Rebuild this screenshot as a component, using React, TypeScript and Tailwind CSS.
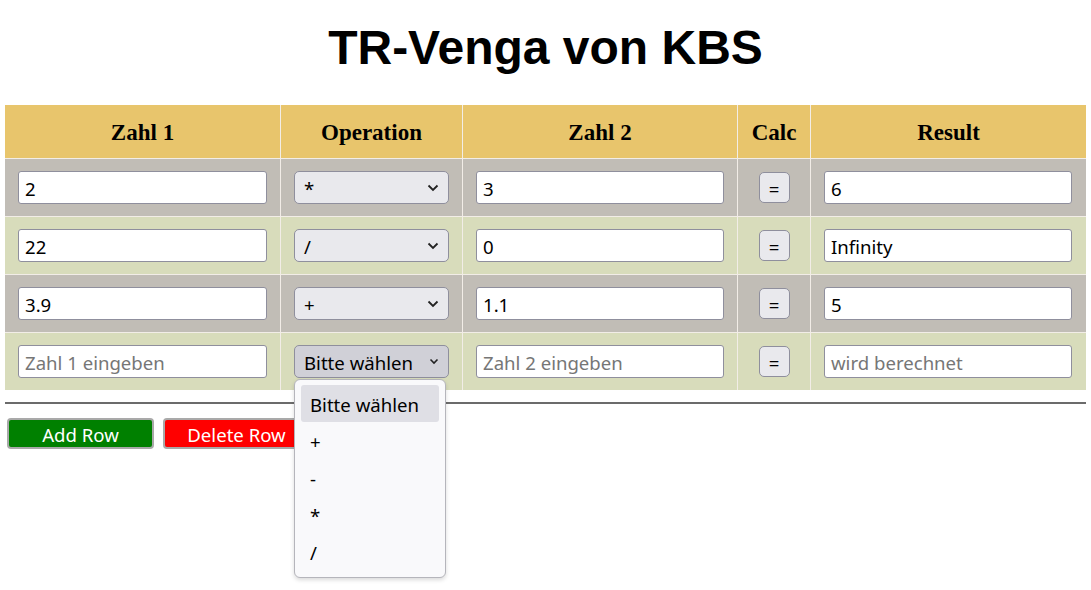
import React from "react";

const sans = { fontFamily: '"Noto Sans", "Open Sans", sans-serif' };

function Chevron({ small }: { small?: boolean }) {
  return small ? (
    <svg width="10" height="7" viewBox="0 0 10 7" className="shrink-0">
      <path d="M1.5 1.5 L5 5 L8.5 1.5" fill="none" stroke="#222" strokeWidth="1.6" />
    </svg>
  ) : (
    <svg width="12" height="8" viewBox="0 0 12 8" className="shrink-0">
      <path d="M1.5 1.5 L6 6 L10.5 1.5" fill="none" stroke="#222" strokeWidth="1.8" />
    </svg>
  );
}

function Input({ value, placeholder }: { value?: string; placeholder?: string }) {
  return (
    <div className="h-[33px] w-full bg-white border border-[#8f8f9d] rounded-[3px] flex items-center pl-[6px] pt-[2px] text-[18.6px]">
      {value ? (
        <span className="text-black">{value}</span>
      ) : (
        <span className="text-[#767676]">{placeholder}</span>
      )}
    </div>
  );
}

function Select({ value, open }: { value: string; open?: boolean }) {
  return (
    <div
      className={`h-[33px] w-full border border-[#8f8f9d] rounded-[5px] flex items-center justify-between pl-[9px] pr-[9px] text-[18.6px] ${
        open ? "bg-[#d0d0d7]" : "bg-[#e9e9ed]"
      }`}
    >
      <span className="text-black pt-[2px]">{value}</span>
      <Chevron small={open} />
    </div>
  );
}

function CalcBtn() {
  return (
    <div className="w-[31px] h-[31px] bg-[#e9e9ed] border border-[#8f8f9d] rounded-[5px] flex items-center justify-center pt-[2px] text-[18.6px] text-black">
      =
    </div>
  );
}

const rows = [
  { a: "2", op: "*", b: "3", r: "6", bg: "bg-[#c1bdb6]" },
  { a: "22", op: "/", b: "0", r: "Infinity", bg: "bg-[#d8dcbb]" },
  { a: "3.9", op: "+", b: "1.1", r: "5", bg: "bg-[#c1bdb6]" },
];

export default function App() {
  const headers = ["Zahl 1", "Operation", "Zahl 2", "Calc", "Result"];
  return (
    <div className="w-[1091px] h-[590px] bg-white relative" style={sans}>
      <div
        className="pt-[21px] text-center font-bold text-[48px] leading-[54px] text-black"
        style={{ fontFamily: '"Liberation Sans", Arial, sans-serif' }}
      >
        TR-Venga von KBS
      </div>
      <div className="mt-[30px] ml-[5px] w-[1081px] grid grid-cols-[275px_181px_274px_72px_275px] gap-px bg-[#f2ede7]">
        {headers.map((h) => (
          <div
            key={h}
            className="h-[53px] bg-[#e8c56c] flex items-center justify-center pt-[3px] font-bold text-[23px] text-black"
            style={{ fontFamily: '"Liberation Serif", "Times New Roman", serif' }}
          >
            {h}
          </div>
        ))}
        {rows.map((r, i) => (
          <React.Fragment key={i}>
            <div className={`h-[57px] ${r.bg} flex items-center px-[13px]`}>
              <Input value={r.a} />
            </div>
            <div className={`h-[57px] ${r.bg} flex items-center px-[13px]`}>
              <Select value={r.op} />
            </div>
            <div className={`h-[57px] ${r.bg} flex items-center px-[13px]`}>
              <Input value={r.b} />
            </div>
            <div className={`h-[57px] ${r.bg} flex items-center justify-center`}>
              <CalcBtn />
            </div>
            <div className={`h-[57px] ${r.bg} flex items-center pl-[13px] pr-[14px]`}>
              <Input value={r.r} />
            </div>
          </React.Fragment>
        ))}
        <div className="h-[57px] bg-[#d8dcbb] flex items-center px-[13px]">
          <Input placeholder="Zahl 1 eingeben" />
        </div>
        <div className="h-[57px] bg-[#d8dcbb] flex items-center px-[13px] relative">
          <Select value="Bitte wählen" open />
        </div>
        <div className="h-[57px] bg-[#d8dcbb] flex items-center px-[13px]">
          <Input placeholder="Zahl 2 eingeben" />
        </div>
        <div className="h-[57px] bg-[#d8dcbb] flex items-center justify-center">
          <CalcBtn />
        </div>
        <div className="h-[57px] bg-[#d8dcbb] flex items-center pl-[13px] pr-[14px]">
          <Input placeholder="wird berechnet" />
        </div>
      </div>
      <div className="mt-[12px] ml-[5px] w-[1081px] h-[2px] bg-[#6b6b6b]" />
      <div className="mt-[14px] ml-[7px] flex gap-[9px]">
        <div className="w-[147px] h-[31px] bg-[#008000] border-2 border-[#a9a9a9] rounded-[4px] flex items-center justify-center pt-[2px] text-white text-[18.6px]">
          Add Row
        </div>
        <div className="w-[147px] h-[31px] bg-[#ff0000] border-2 border-[#a9a9a9] rounded-[4px] flex items-center justify-center pt-[2px] text-white text-[18.6px]">
          Delete Row
        </div>
      </div>

      {/* open dropdown */}
      <div className="absolute left-[294px] top-[379px] w-[152px] h-[199px] bg-[#f9f9fb] border border-[#b5b5bb] rounded-[6px] shadow-[0_2px_4px_rgba(0,0,0,0.15)] px-[6px] pt-[5px] text-[18.6px] text-black">
        <div className="h-[37px] bg-[#dfdfe5] rounded-[3px] flex items-center pl-[9px] pt-[2px]">Bitte wählen</div>
        <div className="h-[37px] flex items-center pl-[9px] pt-[3px]">+</div>
        <div className="h-[37px] flex items-center pl-[9px] pt-[3px]">-</div>
        <div className="h-[37px] flex items-center pl-[9px] pt-[3px]">*</div>
        <div className="h-[37px] flex items-center pl-[9px] pt-[3px]">/</div>
      </div>
    </div>
  );
}
